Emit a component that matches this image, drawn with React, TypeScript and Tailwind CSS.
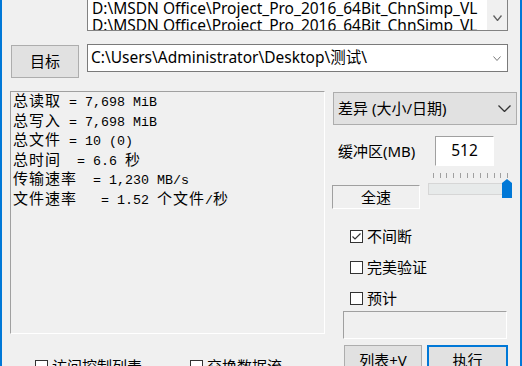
import React from 'react';

// --- Shared styles ---
const uiFont = "font-['Noto_Sans','Noto_Sans_CJK_SC',sans-serif]";
const sunken = 'border-t border-l border-t-[#a0a0a0] border-l-[#a0a0a0] border-b border-r border-b-white border-r-white';

const stats = [
  '总读取 = 7,698 MiB',
  '总写入 = 7,698 MiB',
  '总文件 = 10 (0)',
  '总时间  = 6.6 秒',
  '传输速率  = 1,230 MB/s',
  '文件速率   = 1.52 个文件/秒',
];

// Splits a line into CJK / non-CJK runs so the CJK part gets the double-width cell
function StatLine({ text }: { text: string }) {
  const parts = text.split(/([\u3400-\u9fff]+)/).filter(Boolean);
  return (
    <div className="whitespace-pre">
      {parts.map((p, i) =>
        /[\u3400-\u9fff]/.test(p) ? (
          <span key={i} className="font-['Noto_Sans_CJK_SC',sans-serif] text-[15px] tracking-[1px]">
            {p}
          </span>
        ) : (
          <span key={i}>{p}</span>
        )
      )}
    </div>
  );
}

function Chevron({ w, h, color = '#606060', sw = 1 }: { w: number; h: number; color?: string; sw?: number }) {
  return (
    <svg width={w} height={h} viewBox={`0 0 ${w} ${h}`}>
      <polyline points={`0.5,0.5 ${w / 2},${h - 0.5} ${w - 0.5},0.5`} fill="none" stroke={color} strokeWidth={sw} />
    </svg>
  );
}

function CheckBox({ label, checked = false }: { label: string; checked?: boolean }) {
  return (
    <div className="flex h-[20px] items-center">
      <div className="flex h-[13px] w-[13px] items-center justify-center border border-[#333] bg-white">
        {checked && (
          <svg width="11" height="11" viewBox="0 0 11 11">
            <polyline points="1.5,5.5 4,8 9.5,2.5" fill="none" stroke="#333" strokeWidth="1.2" />
          </svg>
        )}
      </div>
      <span className="ml-[4px] text-[15px] leading-[20px]">{label}</span>
    </div>
  );
}

function Slider() {
  const ticks = Array.from({ length: 12 }, (_, i) => 5 + (i * 74) / 11);
  return (
    <svg width="85" height="33" viewBox="0 0 85 33">
      {ticks.map((x, i) => (
        <line key={i} x1={Math.round(x) + 0.5} y1="0" x2={Math.round(x) + 0.5} y2="5" stroke="#a0a0a0" />
      ))}
      <rect x="0.5" y="10.5" width="76" height="11" fill="#e7eaea" stroke="#d6d6d6" />
      <polygon points="74,10 79,6 84,10 84,25 74,25" fill="#0078d7" />
    </svg>
  );
}

export default function App() {
  return (
    <div
      className={`flex h-[366px] w-[522px] flex-col overflow-hidden border-x-2 border-[#0078d7] bg-[#f0f0f0] text-black ${uiFont}`}
    >
      {/* --- Source list (scrolled, top cut off) --- */}
      <div className="ml-[85px] flex h-[31px] w-[421px] shrink-0 border-x border-b border-[#828282] bg-white">
        <div className="flex-1 overflow-hidden pl-[4px] text-[15.5px] leading-[17px]">
          <div className="whitespace-nowrap">D:\MSDN Office\Project_Pro_2016_64Bit_ChnSimp_VL</div>
          <div className="whitespace-nowrap">D:\MSDN Office\Project_Pro_2016_64Bit_ChnSimp_VL</div>
        </div>
        <div className="flex w-[20px] justify-center bg-[#f0f0f0] pt-[15px]">
          <Chevron w={9} h={6} color="#606060" sw={1.3} />
        </div>
      </div>

      {/* --- Target row --- */}
      <div className="mt-[13px] flex shrink-0 items-start">
        <button className="ml-[9px] mt-[1px] flex h-[33px] w-[68px] items-center justify-center border border-[#adadad] bg-[#e1e1e1] text-[15px]">
          目标
        </button>
        <div className="ml-[8px] flex h-[28px] w-[421px] items-center border border-[#7a7a7a] bg-white pl-[3px] pr-[6px]">
          <span className="flex-1 whitespace-nowrap text-[15.5px]">C:\Users\Administrator\Desktop\测试\</span>
          <Chevron w={8} h={5} color="#7a7a7a" />
        </div>
      </div>

      {/* --- Main area --- */}
      <div className="mt-[13px] flex items-start">
        {/* Left: stats + options */}
        <div className="ml-[8px] flex flex-col">
          <div
            className={`h-[243px] w-[315px] pl-[2px] font-['Liberation_Mono',monospace] text-[13.33px] leading-[16.6px] ${sunken}`}
          >
            {stats.map((s) => (
              <StatLine key={s} text={s} />
            ))}
          </div>
          <div className="mt-[22px] flex">
            <div className="ml-[25px]">
              <CheckBox label="访问控制列表" />
            </div>
            <div className="ml-[48px]">
              <CheckBox label="交换数据流" />
            </div>
          </div>
        </div>

        {/* Right: mode, buffer, checks, buttons */}
        <div className="ml-[8px] flex w-[184px] flex-col">
          <div className="mt-[1px] flex h-[33px] items-center justify-between border border-[#adadad] bg-[#e1e1e1] pl-[4px] pr-[5px]">
            <span className="text-[15px]">差异 (大小/日期)</span>
            <Chevron w={13} h={7} color="#333" sw={1.3} />
          </div>

          <div className="mt-[11px] flex h-[30px] items-center">
            <div className="w-[102px] pl-[5px] text-[15px]">缓冲区(MB)</div>
            <div className={`flex h-[30px] w-[59px] items-center justify-center bg-white text-[15.5px] ${sunken}`}>512</div>
          </div>

          <div className="flex items-start">
            <div className={`ml-[-1px] mt-[19px] flex h-[24px] w-[88px] items-center justify-center text-[15px] ${sunken}`}>
              全速
            </div>
            <div className="ml-[8px] mt-[7px]">
              <Slider />
            </div>
          </div>

          <div className="ml-[17px] mt-[17px] flex flex-col gap-[11px]">
            <CheckBox label="不间断" checked />
            <CheckBox label="完美验证" />
            <CheckBox label="预计" />
          </div>

          <div className={`ml-[10px] mt-[3px] h-[28px] w-[164px] ${sunken}`} />

          <div className="ml-[11px] mt-[6px] flex gap-[5px]">
            <button className="flex h-[32px] w-[78px] items-start justify-center border border-[#adadad] bg-[#e1e1e1] pt-[3px] text-[15px]">
              列表+V
            </button>
            <button className="flex h-[32px] w-[81px] items-start justify-center border-2 border-[#0078d7] bg-[#e1e1e1] pt-[2px] text-[15px]">
              执行
            </button>
          </div>
        </div>
      </div>
    </div>
  );
}
